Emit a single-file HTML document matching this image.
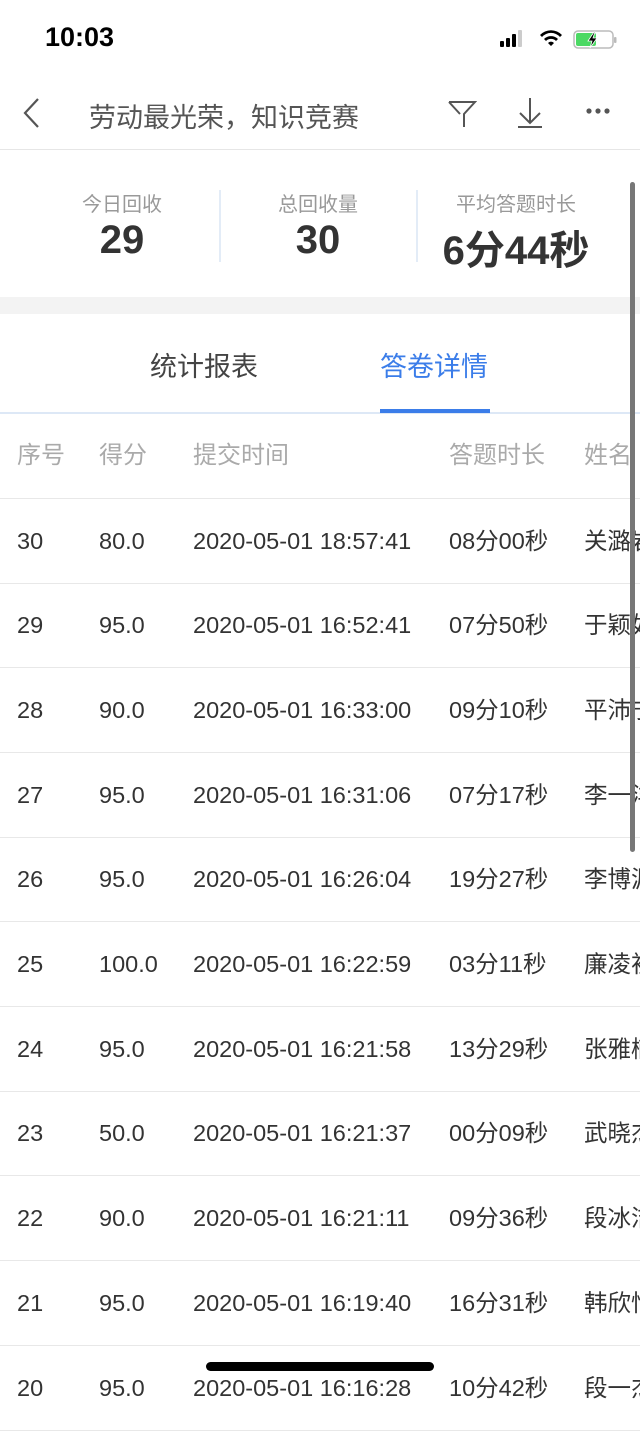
<!DOCTYPE html>
<html><head><meta charset="utf-8"><style>
*{margin:0;padding:0;box-sizing:border-box}
body{width:640px;height:1385px;overflow:hidden;background:#fff;font-family:"Liberation Sans","Noto Sans CJK SC",sans-serif;position:relative}
.abs{position:absolute;white-space:nowrap}
.row{position:absolute;left:0;width:640px;height:85px;border-bottom:1px solid #e8e8e8;font-size:23.5px;color:#333}
.row span{position:absolute;top:0;line-height:84px;white-space:nowrap}
</style></head><body>
<div class="abs" style="left:45px;top:22px;font-size:27px;font-weight:bold;color:#000">10:03</div>
<svg class="abs" style="left:498px;top:29px" width="120" height="22" viewBox="0 0 120 22">
<rect x="2" y="12" width="4" height="6" rx="1" fill="#000"/><rect x="8" y="9" width="4" height="9" rx="1" fill="#000"/><rect x="14" y="5" width="4" height="13" rx="1" fill="#000"/><rect x="20" y="1" width="4" height="17" rx="1" fill="#ccc"/>
<path d="M53 17l-3-3a4 4 0 0 1 6 0z M46 10a10 10 0 0 1 14 0l-2 2a7 7 0 0 0-10 0z M42 6a15 15 0 0 1 22 0l-2 2a12 12 0 0 0-18 0z" fill="#000"/>
<rect x="76" y="2" width="39" height="17" rx="4" fill="none" stroke="#bbb" stroke-width="1.5"/><rect x="78" y="4" width="20" height="13" rx="2" fill="#4cd964"/><rect x="116" y="8" width="2.5" height="6" rx="1" fill="#bbb"/>
<path d="M96 3l-6 9h4l-2 7 7-10h-4l2-6z" fill="#000" stroke="#fff" stroke-width="0.8"/>
</svg>
<svg class="abs" style="left:20px;top:96px" width="22" height="34"><path d="M18 3L5 17l13 14" fill="none" stroke="#555" stroke-width="2.2"/></svg>
<div class="abs" style="left:89px;top:96px;font-size:27px;color:#555">劳动最光荣，知识竞赛</div>
<svg class="abs" style="left:447px;top:98px" width="30" height="32"><path d="M2 4h26L17 16v13M13 16L2 4" fill="none" stroke="#555" stroke-width="2"/></svg>
<svg class="abs" style="left:515px;top:96px" width="30" height="34"><path d="M15 2v25M5 17l10 10 10-10M3 31h24" fill="none" stroke="#555" stroke-width="2"/></svg>
<svg class="abs" style="left:585px;top:106px" width="28" height="10"><circle cx="4" cy="5" r="2.6" fill="#555"/><circle cx="13" cy="5" r="2.6" fill="#555"/><circle cx="22" cy="5" r="2.6" fill="#555"/></svg>
<div class="abs" style="left:0;top:149px;width:640px;height:1px;background:#e6e6e6"></div>

<div class="abs" style="left:22px;top:188px;width:200px;text-align:center;font-size:20px;color:#999">今日回收</div>
<div class="abs" style="left:22px;top:218px;width:200px;text-align:center;font-size:40px;font-weight:bold;color:#333">29</div>
<div class="abs" style="left:219px;top:190px;width:2px;height:72px;background:#e3ecf7"></div>
<div class="abs" style="left:218px;top:188px;width:200px;text-align:center;font-size:20px;color:#999">总回收量</div>
<div class="abs" style="left:218px;top:218px;width:200px;text-align:center;font-size:40px;font-weight:bold;color:#333">30</div>
<div class="abs" style="left:416px;top:190px;width:2px;height:72px;background:#e3ecf7"></div>
<div class="abs" style="left:416px;top:188px;width:200px;text-align:center;font-size:20px;color:#999">平均答题时长</div>
<div class="abs" style="left:416px;top:218px;width:200px;text-align:center;font-size:40px;font-weight:bold;color:#333">6分44秒</div>
<div class="abs" style="left:0;top:297px;width:640px;height:17px;background:#f3f3f3"></div>

<div class="abs" style="left:150px;top:345px;font-size:27px;color:#444">统计报表</div>
<div class="abs" style="left:380px;top:345px;font-size:27px;color:#3b7de9">答卷详情</div>
<div class="abs" style="left:0;top:412px;width:640px;height:2px;background:#dde8f6"></div>
<div class="abs" style="left:380px;top:409px;width:110px;height:4px;background:#3b7de9"></div>

<div class="row" style="top:414px;color:#aaa;height:85px;font-size:24px"><span style="left:17px">序号</span><span style="left:99px">得分</span><span style="left:193px">提交时间</span><span style="left:449px">答题时长</span><span style="left:584px">姓名</span></div>
<div class="row" style="top:499px"><span style="left:17px">30</span><span style="left:99px">80.0</span><span style="left:193px">2020-05-01 18:57:41</span><span style="left:449px">08分00秒</span><span style="left:584px">关潞岩</span></div>
<div class="row" style="top:583px"><span style="left:17px">29</span><span style="left:99px">95.0</span><span style="left:193px">2020-05-01 16:52:41</span><span style="left:449px">07分50秒</span><span style="left:584px">于颖如</span></div>
<div class="row" style="top:668px"><span style="left:17px">28</span><span style="left:99px">90.0</span><span style="left:193px">2020-05-01 16:33:00</span><span style="left:449px">09分10秒</span><span style="left:584px">平沛宁</span></div>
<div class="row" style="top:753px"><span style="left:17px">27</span><span style="left:99px">95.0</span><span style="left:193px">2020-05-01 16:31:06</span><span style="left:449px">07分17秒</span><span style="left:584px">李一洋</span></div>
<div class="row" style="top:837px"><span style="left:17px">26</span><span style="left:99px">95.0</span><span style="left:193px">2020-05-01 16:26:04</span><span style="left:449px">19分27秒</span><span style="left:584px">李博源</span></div>
<div class="row" style="top:922px"><span style="left:17px">25</span><span style="left:99px">100.0</span><span style="left:193px">2020-05-01 16:22:59</span><span style="left:449px">03分11秒</span><span style="left:584px">廉凌初</span></div>
<div class="row" style="top:1007px"><span style="left:17px">24</span><span style="left:99px">95.0</span><span style="left:193px">2020-05-01 16:21:58</span><span style="left:449px">13分29秒</span><span style="left:584px">张雅楠</span></div>
<div class="row" style="top:1091px"><span style="left:17px">23</span><span style="left:99px">50.0</span><span style="left:193px">2020-05-01 16:21:37</span><span style="left:449px">00分09秒</span><span style="left:584px">武晓杰</span></div>
<div class="row" style="top:1176px"><span style="left:17px">22</span><span style="left:99px">90.0</span><span style="left:193px">2020-05-01 16:21:11</span><span style="left:449px">09分36秒</span><span style="left:584px">段冰洁</span></div>
<div class="row" style="top:1261px"><span style="left:17px">21</span><span style="left:99px">95.0</span><span style="left:193px">2020-05-01 16:19:40</span><span style="left:449px">16分31秒</span><span style="left:584px">韩欣怡</span></div>
<div class="row" style="top:1346px"><span style="left:17px">20</span><span style="left:99px">95.0</span><span style="left:193px">2020-05-01 16:16:28</span><span style="left:449px">10分42秒</span><span style="left:584px">段一杰</span></div>

<div class="abs" style="left:630px;top:182px;width:5px;height:670px;border-radius:3px;background:#777"></div>
<div class="abs" style="left:206px;top:1362px;width:228px;height:9px;border-radius:5px;background:#000"></div>
</body></html>
